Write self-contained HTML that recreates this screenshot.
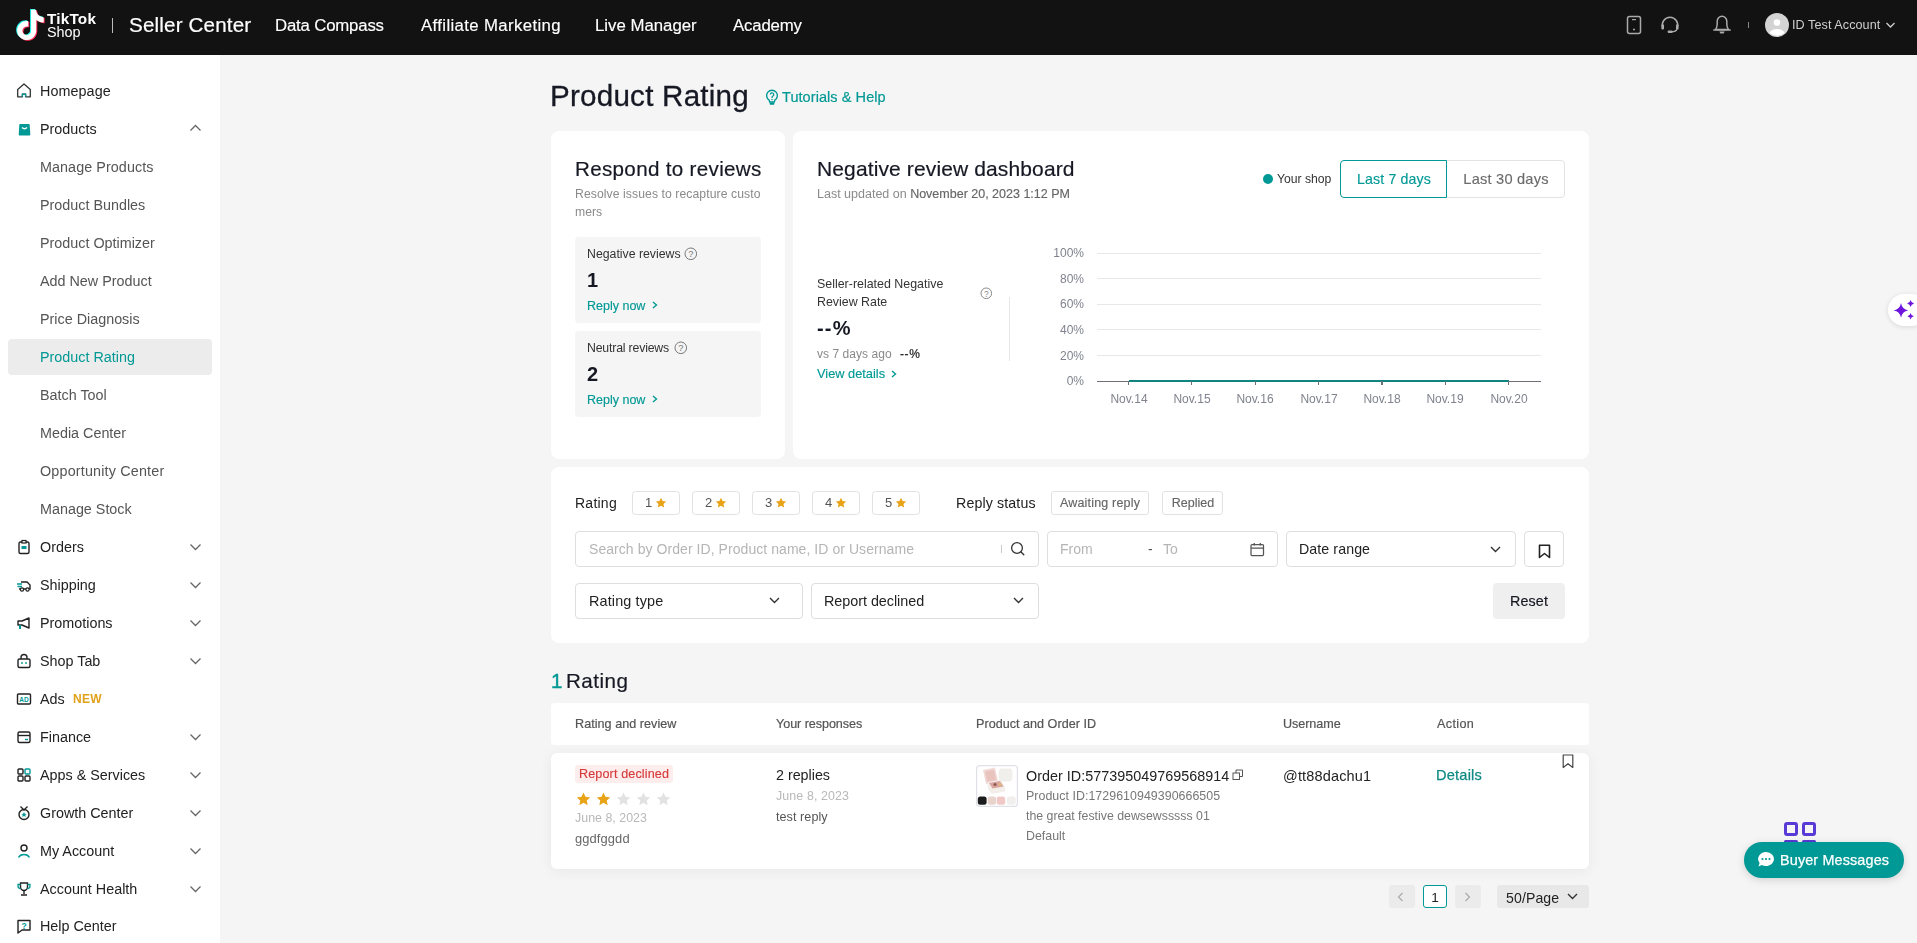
<!DOCTYPE html>
<html><head><meta charset="utf-8"><title>Product Rating</title>
<style>
html,body{margin:0;padding:0;}
body{width:1917px;height:943px;overflow:hidden;position:relative;background:#f5f5f5;font-family:"Liberation Sans", sans-serif;}
.t{position:absolute;white-space:nowrap;will-change:transform;}
.r{position:absolute;}
</style></head><body>
<div class="r" style="left:0.0px;top:0.0px;width:1917.0px;height:55.0px;background:#121212;"></div>
<svg class="r" style="left:14.0px;top:8.0px;" width="34" height="35" viewBox="0 0 34 35"><g transform="translate(1.2,1.8) scale(1.27,1.26)">
<path d="M12.525.02c1.31-.02 2.61-.01 3.91-.02.08 1.53.63 3.09 1.75 4.17 1.12 1.11 2.7 1.62 4.24 1.79v4.03c-1.44-.05-2.89-.35-4.2-.97-.57-.26-1.1-.59-1.62-.93-.01 2.920.01 5.84-.02 8.75-.08 1.4-.54 2.79-1.35 3.94-1.31 1.92-3.58 3.17-5.91 3.21-1.43.08-2.86-.31-4.08-1.03-2.020-1.19-3.44-3.37-3.65-5.71-.02-.5-.03-1-.01-1.49.18-1.9 1.12-3.72 2.58-4.96 1.66-1.44 3.980-2.13 6.15-1.72.02 1.48-.04 2.96-.04 4.440-.99-.32-2.15-.23-3.02.37-.63.41-1.11 1.04-1.36 1.75-.21.51-.15 1.07-.14 1.61.24 1.64 1.82 3.02 3.5 2.87 1.12-.01 2.19-.66 2.77-1.61.19-.33.4-.67.41-1.06.1-1.79.06-3.57.07-5.36.01-4.03-.01-8.05.02-12.07z" fill="#25F4EE" transform="translate(-0.8,-0.6)"/>
<path d="M12.525.02c1.31-.02 2.61-.01 3.91-.02.08 1.53.63 3.09 1.75 4.17 1.12 1.11 2.7 1.62 4.24 1.79v4.03c-1.44-.05-2.89-.35-4.2-.97-.57-.26-1.1-.59-1.62-.93-.01 2.920.01 5.84-.02 8.75-.08 1.4-.54 2.79-1.35 3.94-1.31 1.92-3.58 3.17-5.91 3.21-1.43.08-2.86-.31-4.08-1.03-2.020-1.19-3.44-3.37-3.65-5.71-.02-.5-.03-1-.01-1.49.18-1.9 1.12-3.72 2.58-4.96 1.66-1.44 3.980-2.13 6.15-1.72.02 1.48-.04 2.96-.04 4.440-.99-.32-2.15-.23-3.02.37-.63.41-1.11 1.04-1.36 1.75-.21.51-.15 1.07-.14 1.61.24 1.64 1.82 3.02 3.5 2.87 1.12-.01 2.19-.66 2.77-1.61.19-.33.4-.67.41-1.06.1-1.79.06-3.57.07-5.36.01-4.03-.01-8.05.02-12.07z" fill="#FE2C55" transform="translate(0.8,0.6)"/>
<path d="M12.525.02c1.31-.02 2.61-.01 3.91-.02.08 1.53.63 3.09 1.75 4.17 1.12 1.11 2.7 1.62 4.24 1.79v4.03c-1.44-.05-2.89-.35-4.2-.97-.57-.26-1.1-.59-1.62-.93-.01 2.920.01 5.84-.02 8.75-.08 1.4-.54 2.79-1.35 3.94-1.31 1.92-3.58 3.17-5.91 3.21-1.43.08-2.86-.31-4.08-1.03-2.020-1.19-3.44-3.37-3.65-5.71-.02-.5-.03-1-.01-1.49.18-1.9 1.12-3.72 2.58-4.96 1.66-1.44 3.980-2.13 6.15-1.72.02 1.48-.04 2.96-.04 4.440-.99-.32-2.15-.23-3.02.37-.63.41-1.11 1.04-1.36 1.75-.21.51-.15 1.07-.14 1.61.24 1.64 1.82 3.02 3.5 2.87 1.12-.01 2.19-.66 2.77-1.61.19-.33.4-.67.41-1.06.1-1.79.06-3.57.07-5.36.01-4.03-.01-8.05.02-12.07z" fill="#fff"/>
</g></svg>
<div class="t" style="left:46.8px;top:10.75px;font-size:15.3px;line-height:15.3px;color:#fff;font-weight:700;letter-spacing:0.200px;">TikTok</div>
<div class="t" style="left:46.8px;top:24.71px;font-size:14.4px;line-height:14.4px;color:#fff;">Shop</div>
<div class="r" style="left:112.0px;top:17.5px;width:1.3px;height:15.0px;background:#bbb;"></div>
<div class="t" id="w0" style="left:128.6px;top:14.96px;font-size:20.6px;line-height:20.6px;color:#fff;letter-spacing:0.167px;-webkit-text-stroke:0.2px #fff;">Seller Center</div>
<div class="t" id="w1" style="left:275.0px;top:17.88px;font-size:16.8px;line-height:16.8px;color:#fff;letter-spacing:-0.182px;-webkit-text-stroke:0.15px #fff;">Data Compass</div>
<div class="t" id="w2" style="left:421.0px;top:17.88px;font-size:16.8px;line-height:16.8px;color:#fff;letter-spacing:0.361px;-webkit-text-stroke:0.15px #fff;">Affiliate Marketing</div>
<div class="t" id="w3" style="left:595.0px;top:17.88px;font-size:16.8px;line-height:16.8px;color:#fff;letter-spacing:0.001px;-webkit-text-stroke:0.15px #fff;">Live Manager</div>
<div class="t" id="w4" style="left:733.0px;top:17.88px;font-size:16.8px;line-height:16.8px;color:#fff;letter-spacing:-0.166px;-webkit-text-stroke:0.15px #fff;">Academy</div>
<svg class="r" style="left:1626.0px;top:15.0px;" width="16" height="20" viewBox="0 0 16 20"><rect x="1.5" y="1.5" width="13" height="17" rx="2" fill="none" stroke="#aaa" stroke-width="1.5"/><rect x="6" y="4" width="4" height="1.2" fill="#aaa"/><circle cx="8" cy="14.5" r="1" fill="#aaa"/></svg>
<svg class="r" style="left:1660.0px;top:16.0px;" width="20" height="20" viewBox="0 0 20 20"><path d="M2.7 11.5 A7.7 7.7 0 1 1 17.3 11.5" fill="none" stroke="#aaa" stroke-width="1.5"/><rect x="1.4" y="8.2" width="2.6" height="5.2" rx="1.2" fill="#aaa"/><rect x="16" y="8.2" width="2.6" height="5.2" rx="1.2" fill="#aaa"/><path d="M17 13 Q16 15.8 11.5 15.8" fill="none" stroke="#aaa" stroke-width="1.4"/><rect x="7.6" y="14.6" width="5" height="2.4" rx="1.2" fill="#aaa"/></svg>
<svg class="r" style="left:1712.0px;top:14.0px;" width="20" height="22" viewBox="0 0 20 22"><path d="M3.5 15.5 Q5.2 13.5 5.2 10 V7.2 A4.8 5 0 0 1 14.8 7.2 V10 Q14.8 13.5 16.5 15.5 Z" fill="none" stroke="#aaa" stroke-width="1.5" stroke-linejoin="round"/><path d="M1.8 16 H18.2" stroke="#aaa" stroke-width="1.5" stroke-linecap="round"/><path d="M7.3 17.6 H12.7 L11.6 19.6 H8.4 Z" fill="#aaa"/></svg>
<div class="r" style="left:1748.0px;top:22.0px;width:1.0px;height:6.0px;background:#888;"></div>
<svg class="r" style="left:1765.0px;top:13.0px;" width="24" height="24" viewBox="0 0 24 24"><circle cx="12" cy="12" r="12" fill="#d3d3d3"/><circle cx="12" cy="9.5" r="3.3" fill="#fff"/><path d="M4.5 20 a8 6 0 0 1 15 0 a12 12 0 0 1 -15 0z" fill="#fff"/></svg>
<div class="t" id="w5" style="left:1792.3px;top:19.13px;font-size:12.6px;line-height:12.6px;color:#cfcfcf;letter-spacing:0.071px;">ID Test Account</div>
<svg class="r" style="left:1885.0px;top:21.0px;" width="11" height="8" viewBox="0 0 11 8"><path d="M1.5 2 l4 4 l4 -4" fill="none" stroke="#cfcfcf" stroke-width="1.3"/></svg>
<div class="r" style="left:0.0px;top:55.0px;width:220.0px;height:888.0px;background:#fff;"></div>
<div class="r" style="left:8.0px;top:339.0px;width:204.0px;height:36.0px;background:#ececec;border-radius:4px;"></div>
<div class="t" id="w6" style="left:40.0px;top:84.05px;font-size:14.35px;line-height:14.35px;color:#222;letter-spacing:0.071px;">Homepage</div>
<div class="t" style="left:40.0px;top:122.05px;font-size:14.35px;line-height:14.35px;color:#222;">Products</div>
<svg class="r" style="left:189.0px;top:124.0px;" width="13" height="8" viewBox="0 0 13 8"><path d="M1.5 6.5 l5 -5 l5 5" fill="none" stroke="#666" stroke-width="1.3"/></svg>
<div class="t" id="w7" style="left:40.0px;top:160.05px;font-size:14.35px;line-height:14.35px;color:#555;letter-spacing:0.071px;">Manage Products</div>
<div class="t" style="left:40.0px;top:198.05px;font-size:14.35px;line-height:14.35px;color:#555;">Product Bundles</div>
<div class="t" style="left:40.0px;top:236.05px;font-size:14.35px;line-height:14.35px;color:#555;">Product Optimizer</div>
<div class="t" style="left:40.0px;top:274.05px;font-size:14.35px;line-height:14.35px;color:#555;">Add New Product</div>
<div class="t" style="left:40.0px;top:312.05px;font-size:14.35px;line-height:14.35px;color:#555;">Price Diagnosis</div>
<div class="t" style="left:40.0px;top:350.05px;font-size:14.35px;line-height:14.35px;color:#009995;">Product Rating</div>
<div class="t" style="left:40.0px;top:388.05px;font-size:14.35px;line-height:14.35px;color:#555;">Batch Tool</div>
<div class="t" style="left:40.0px;top:426.05px;font-size:14.35px;line-height:14.35px;color:#555;">Media Center</div>
<div class="t" id="w8" style="left:40.0px;top:464.05px;font-size:14.35px;line-height:14.35px;color:#555;letter-spacing:0.176px;">Opportunity Center</div>
<div class="t" style="left:40.0px;top:502.05px;font-size:14.35px;line-height:14.35px;color:#555;">Manage Stock</div>
<div class="t" style="left:40.0px;top:540.05px;font-size:14.35px;line-height:14.35px;color:#222;">Orders</div>
<svg class="r" style="left:189.0px;top:543.0px;" width="13" height="8" viewBox="0 0 13 8"><path d="M1.5 1.5 l5 5 l5 -5" fill="none" stroke="#666" stroke-width="1.3"/></svg>
<div class="t" style="left:40.0px;top:578.05px;font-size:14.35px;line-height:14.35px;color:#222;">Shipping</div>
<svg class="r" style="left:189.0px;top:581.0px;" width="13" height="8" viewBox="0 0 13 8"><path d="M1.5 1.5 l5 5 l5 -5" fill="none" stroke="#666" stroke-width="1.3"/></svg>
<div class="t" style="left:40.0px;top:616.05px;font-size:14.35px;line-height:14.35px;color:#222;">Promotions</div>
<svg class="r" style="left:189.0px;top:619.0px;" width="13" height="8" viewBox="0 0 13 8"><path d="M1.5 1.5 l5 5 l5 -5" fill="none" stroke="#666" stroke-width="1.3"/></svg>
<div class="t" style="left:40.0px;top:654.05px;font-size:14.35px;line-height:14.35px;color:#222;">Shop Tab</div>
<svg class="r" style="left:189.0px;top:657.0px;" width="13" height="8" viewBox="0 0 13 8"><path d="M1.5 1.5 l5 5 l5 -5" fill="none" stroke="#666" stroke-width="1.3"/></svg>
<div class="t" style="left:40.0px;top:692.05px;font-size:14.35px;line-height:14.35px;color:#222;">Ads</div>
<div class="t" style="left:40.0px;top:730.05px;font-size:14.35px;line-height:14.35px;color:#222;">Finance</div>
<svg class="r" style="left:189.0px;top:733.0px;" width="13" height="8" viewBox="0 0 13 8"><path d="M1.5 1.5 l5 5 l5 -5" fill="none" stroke="#666" stroke-width="1.3"/></svg>
<div class="t" style="left:40.0px;top:768.05px;font-size:14.35px;line-height:14.35px;color:#222;">Apps &amp; Services</div>
<svg class="r" style="left:189.0px;top:771.0px;" width="13" height="8" viewBox="0 0 13 8"><path d="M1.5 1.5 l5 5 l5 -5" fill="none" stroke="#666" stroke-width="1.3"/></svg>
<div class="t" style="left:40.0px;top:806.05px;font-size:14.35px;line-height:14.35px;color:#222;">Growth Center</div>
<svg class="r" style="left:189.0px;top:809.0px;" width="13" height="8" viewBox="0 0 13 8"><path d="M1.5 1.5 l5 5 l5 -5" fill="none" stroke="#666" stroke-width="1.3"/></svg>
<div class="t" style="left:40.0px;top:844.05px;font-size:14.35px;line-height:14.35px;color:#222;">My Account</div>
<svg class="r" style="left:189.0px;top:847.0px;" width="13" height="8" viewBox="0 0 13 8"><path d="M1.5 1.5 l5 5 l5 -5" fill="none" stroke="#666" stroke-width="1.3"/></svg>
<div class="t" style="left:40.0px;top:882.05px;font-size:14.35px;line-height:14.35px;color:#222;">Account Health</div>
<svg class="r" style="left:189.0px;top:885.0px;" width="13" height="8" viewBox="0 0 13 8"><path d="M1.5 1.5 l5 5 l5 -5" fill="none" stroke="#666" stroke-width="1.3"/></svg>
<div class="t" style="left:40.0px;top:919.05px;font-size:14.35px;line-height:14.35px;color:#222;">Help Center</div>
<div class="t" style="left:73.0px;top:693.04px;font-size:12px;line-height:12px;color:#e0a21a;font-weight:700;letter-spacing:0.3px;">NEW</div>
<svg class="r" style="left:16.0px;top:83.0px;" width="16" height="16" viewBox="0 0 16 16"><path d="M1.7 6.5 L8 1 L14.3 6.5 V13.8 H9.6 V11.2 H6.4 V13.8 H1.7 Z" fill="none" stroke="#333" stroke-width="1.3" stroke-linejoin="round"/><path d="M6.4 13.8 V11.2 H9.6 V13.8" fill="none" stroke="#009995" stroke-width="1.3"/></svg>
<svg class="r" style="left:16.0px;top:121.0px;" width="16" height="16" viewBox="0 0 16 16"><path d="M4 1.5 H13 Q13.6 1.5 13.7 2.2 L14.3 12.2 Q14.3 13 13.5 13 H3.5 Q2.7 13 2.7 12.2 L3.3 2.2 Q3.4 1.5 4 1.5Z" fill="#009995" transform="translate(0,1.5)"/><path d="M6 6.5 q2.5 2.5 5 0" fill="none" stroke="#fff" stroke-width="1.3"/></svg>
<svg class="r" style="left:16.0px;top:539.0px;" width="16" height="16" viewBox="0 0 16 16"><rect x="3" y="3" width="10" height="11.5" rx="1.5" fill="none" stroke="#222" stroke-width="1.4"/><rect x="6" y="1.5" width="4" height="2.5" fill="#fff" stroke="#222" stroke-width="1.2"/><rect x="5.5" y="7" width="5" height="3" fill="#009995"/></svg>
<svg class="r" style="left:16.0px;top:577.0px;" width="16" height="16" viewBox="0 0 16 16"><path d="M5 5 H11 L14 8 V12 H3" fill="none" stroke="#222" stroke-width="1.4"/><path d="M1 7 H6 M1.5 9.5 H6" stroke="#009995" stroke-width="1.4"/><circle cx="6" cy="12.5" r="1.6" fill="#fff" stroke="#222" stroke-width="1.2"/><circle cx="11.5" cy="12.5" r="1.6" fill="#fff" stroke="#222" stroke-width="1.2"/></svg>
<svg class="r" style="left:16.0px;top:615.0px;" width="16" height="16" viewBox="0 0 16 16"><path d="M2 6 H6 L13 3 V13 L6 10 H2 Z" fill="none" stroke="#222" stroke-width="1.4" stroke-linejoin="round"/><path d="M4 10 V14" stroke="#009995" stroke-width="2"/></svg>
<svg class="r" style="left:16.0px;top:653.0px;" width="16" height="16" viewBox="0 0 16 16"><rect x="2" y="6" width="12" height="8.5" rx="1.5" fill="none" stroke="#222" stroke-width="1.4"/><path d="M5 6 V4.5 a3 3 0 0 1 6 0 V6" fill="none" stroke="#222" stroke-width="1.4"/><circle cx="6" cy="10" r="0.9" fill="#009995"/><circle cx="10" cy="10" r="0.9" fill="#009995"/></svg>
<svg class="r" style="left:16.0px;top:691.0px;" width="16" height="16" viewBox="0 0 16 16"><rect x="1.5" y="3" width="13" height="10" rx="1" fill="none" stroke="#222" stroke-width="1.4"/><text x="8" y="11" font-size="6.5" font-family="Liberation Sans" font-weight="700" fill="#009995" text-anchor="middle">AD</text></svg>
<svg class="r" style="left:16.0px;top:729.0px;" width="16" height="16" viewBox="0 0 16 16"><rect x="2" y="3" width="12" height="10.5" rx="1.5" fill="none" stroke="#222" stroke-width="1.4"/><path d="M2 6.5 H14" stroke="#222" stroke-width="1.4"/><path d="M9 10.5 H12" stroke="#009995" stroke-width="1.4"/></svg>
<svg class="r" style="left:16.0px;top:767.0px;" width="16" height="16" viewBox="0 0 16 16"><rect x="2" y="2" width="5" height="5" rx="1" fill="none" stroke="#222" stroke-width="1.4"/><rect x="9" y="2" width="5" height="5" rx="1" fill="none" stroke="#009995" stroke-width="1.4"/><rect x="2" y="9" width="5" height="5" rx="1" fill="none" stroke="#222" stroke-width="1.4"/><rect x="9" y="9" width="5" height="5" rx="1" fill="none" stroke="#222" stroke-width="1.4"/></svg>
<svg class="r" style="left:16.0px;top:805.0px;" width="16" height="16" viewBox="0 0 16 16"><circle cx="8" cy="9.5" r="5" fill="none" stroke="#222" stroke-width="1.4"/><path d="M4.5 1.5 L8 5 L11.5 1.5" fill="none" stroke="#222" stroke-width="1.3"/><path d="M8 7 l0.8 1.7 1.8 0.2 -1.3 1.2 0.4 1.8 -1.7 -0.9 -1.7 0.9 0.4 -1.8 -1.3 -1.2 1.8 -0.2z" fill="#009995"/></svg>
<svg class="r" style="left:16.0px;top:843.0px;" width="16" height="16" viewBox="0 0 16 16"><circle cx="8" cy="5" r="3" fill="none" stroke="#222" stroke-width="1.4"/><path d="M2.5 14.5 a6 5 0 0 1 11 0" fill="none" stroke="#009995" stroke-width="1.5"/></svg>
<svg class="r" style="left:16.0px;top:881.0px;" width="16" height="16" viewBox="0 0 16 16"><path d="M4.5 2 H11.5 V6 a3.5 3.5 0 0 1 -7 0 Z" fill="none" stroke="#222" stroke-width="1.4"/><path d="M4.5 3.5 H2 V5 a2.5 2.5 0 0 0 2.5 2.5 M11.5 3.5 H14 V5 a2.5 2.5 0 0 1 -2.5 2.5" fill="none" stroke="#009995" stroke-width="1.3"/><path d="M8 9.5 V13 M5 14 H11" stroke="#222" stroke-width="1.4"/></svg>
<svg class="r" style="left:16.0px;top:918.0px;" width="16" height="16" viewBox="0 0 16 16"><path d="M2 2.5 H14 V12 H6 L2 15 Z" fill="none" stroke="#222" stroke-width="1.4" stroke-linejoin="round"/><text x="8" y="10.5" font-size="8.5" font-family="Liberation Sans" font-weight="700" fill="#009995" text-anchor="middle">?</text></svg>
<div class="t" id="w9" style="left:549.9px;top:81.34px;font-size:29.6px;line-height:29.6px;color:#161823;letter-spacing:0.231px;-webkit-text-stroke:0.3px #161823;">Product Rating</div>
<svg class="r" style="left:765.0px;top:89.0px;" width="14" height="17" viewBox="0 0 14 17"><path d="M4.2 11.2 A5.4 5.4 0 1 1 9.8 11.2 L9.3 13 H4.7 Z" fill="none" stroke="#009995" stroke-width="1.4" stroke-linejoin="round"/><rect x="4.6" y="13.6" width="4.8" height="2.2" rx="0.8" fill="#009995"/><path d="M5.3 5.6 A1.75 1.75 0 1 1 7.9 7.1 Q7 7.6 7 8.6 V9" fill="none" stroke="#009995" stroke-width="1.2"/><circle cx="7" cy="10.6" r="0.75" fill="#009995"/></svg>
<div class="t" id="w10" style="left:782.4px;top:89.73px;font-size:14.5px;line-height:14.5px;color:#009995;letter-spacing:0.067px;-webkit-text-stroke:0.2px #009995;">Tutorials &amp; Help</div>
<div class="r" style="left:551.0px;top:131.0px;width:234.0px;height:328.0px;background:#fff;border-radius:8px;"></div>
<div class="r" style="left:793.0px;top:131.0px;width:796.0px;height:328.0px;background:#fff;border-radius:8px;"></div>
<div class="t" id="w11" style="left:575.3px;top:158.56px;font-size:20.6px;line-height:20.6px;color:#161823;letter-spacing:0.322px;-webkit-text-stroke:0.2px #161823;">Respond to reviews</div>
<div class="t" id="w12" style="left:575.3px;top:188.17px;font-size:12.2px;line-height:12.2px;color:#8a8a8a;letter-spacing:0.079px;">Resolve issues to recapture custo</div>
<div class="t" style="left:575.3px;top:205.97px;font-size:12.2px;line-height:12.2px;color:#8a8a8a;">mers</div>
<div class="r" style="left:575.0px;top:237.0px;width:186.0px;height:86.0px;background:#f5f5f5;border-radius:4px;"></div>
<div class="t" id="w13" style="left:587.4px;top:248.09px;font-size:12.3px;line-height:12.3px;color:#333;letter-spacing:-0.001px;">Negative reviews</div>
<svg class="r" style="left:683.9px;top:247.2px;" width="13.6" height="13.6" viewBox="0 0 13.6 13.6"><circle cx="6.8" cy="6.8" r="5.8" fill="none" stroke="#777" stroke-width="1"/><text x="6.8" y="10.1" font-size="9.3" font-family="Liberation Sans" fill="#777" text-anchor="middle">?</text></svg>
<div class="t" style="left:587.4px;top:270.37px;font-size:20px;line-height:20px;color:#161823;font-weight:700;">1</div>
<div class="t" id="w14" style="left:587.4px;top:300.22px;font-size:12.5px;line-height:12.5px;color:#009995;-webkit-text-stroke:0.15px #009995;">Reply now</div>
<svg class="r" style="left:652.0px;top:301.0px;" width="6" height="8" viewBox="0 0 6 8"><path d="M1 1 l3.5 3.0 l-3.5 3.0" fill="none" stroke="#009995" stroke-width="1.4"/></svg>
<div class="r" style="left:575.0px;top:331.0px;width:186.0px;height:86.0px;background:#f5f5f5;border-radius:4px;"></div>
<div class="t" style="left:587.4px;top:342.09px;font-size:12.3px;line-height:12.3px;color:#333;letter-spacing:-0.180px;">Neutral reviews</div>
<svg class="r" style="left:674.2px;top:341.2px;" width="13.6" height="13.6" viewBox="0 0 13.6 13.6"><circle cx="6.8" cy="6.8" r="5.8" fill="none" stroke="#777" stroke-width="1"/><text x="6.8" y="10.1" font-size="9.3" font-family="Liberation Sans" fill="#777" text-anchor="middle">?</text></svg>
<div class="t" style="left:587.4px;top:364.37px;font-size:20px;line-height:20px;color:#161823;font-weight:700;">2</div>
<div class="t" id="w15" style="left:587.4px;top:394.22px;font-size:12.5px;line-height:12.5px;color:#009995;-webkit-text-stroke:0.15px #009995;">Reply now</div>
<svg class="r" style="left:652.0px;top:395.0px;" width="6" height="8" viewBox="0 0 6 8"><path d="M1 1 l3.5 3.0 l-3.5 3.0" fill="none" stroke="#009995" stroke-width="1.4"/></svg>
<div class="t" id="w16" style="left:817.2px;top:158.42px;font-size:21px;line-height:21px;color:#161823;letter-spacing:0.125px;-webkit-text-stroke:0.2px #161823;">Negative review dashboard</div>
<div class="t" style="left:817.0px;top:187.92px;font-size:12.5px;line-height:12.5px;color:#8a8a8a;">Last updated on <span style="color:#666;-webkit-text-stroke:0.15px #666">November 20, 2023 1:12 PM</span></div>
<svg class="r" style="left:1262.0px;top:173.0px;" width="12" height="12" viewBox="0 0 12 12"><circle cx="6" cy="6" r="5" fill="#009995"/></svg>
<div class="t" id="w17" style="left:1277.0px;top:172.67px;font-size:12.2px;line-height:12.2px;color:#333;letter-spacing:-0.014px;">Your shop</div>
<div class="r" style="left:1446.0px;top:160.0px;width:119.0px;height:38.0px;background:#fff;border:1px solid #e3e3e3;box-sizing:border-box;border-radius:4px;border-top-left-radius:0;border-bottom-left-radius:0;"></div>
<div class="r" style="left:1340.0px;top:160.0px;width:107.0px;height:38.0px;background:#fff;border:1px solid #009995;box-sizing:border-box;border-radius:4px;border-top-right-radius:0;border-bottom-right-radius:0;"></div>
<div class="t" id="w18" style="left:1193.6px;width:400px;text-align:center;top:172.48px;font-size:14.2px;line-height:14.2px;color:#009995;letter-spacing:0.129px;-webkit-text-stroke:0.15px #009995;"><span>Last 7 days</span></div>
<div class="t" id="w19" style="left:1305.7px;width:400px;text-align:center;top:172.14px;font-size:14.6px;line-height:14.6px;color:#6b6b6b;letter-spacing:0.221px;-webkit-text-stroke:0.15px #6b6b6b;"><span>Last 30 days</span></div>
<div class="t" id="w20" style="left:817.0px;top:278.00px;font-size:12.4px;line-height:12.4px;color:#333;letter-spacing:0.014px;">Seller-related Negative</div>
<div class="t" style="left:817.0px;top:295.80px;font-size:12.4px;line-height:12.4px;color:#333;">Review Rate</div>
<svg class="r" style="left:980.2px;top:286.7px;" width="12.6" height="12.6" viewBox="0 0 12.6 12.6"><circle cx="6.3" cy="6.3" r="5.3" fill="none" stroke="#888" stroke-width="1"/><text x="6.3" y="9.6" font-size="8.5" font-family="Liberation Sans" fill="#888" text-anchor="middle">?</text></svg>
<div class="r" style="left:1009.0px;top:297.0px;width:1.0px;height:64.0px;background:#e6e6e6;"></div>
<div class="t" style="left:817.0px;top:317.57px;font-size:20px;line-height:20px;color:#161823;font-weight:700;letter-spacing:1.200px;">--%</div>
<div class="t" id="w21" style="left:817.0px;top:347.84px;font-size:12px;line-height:12px;color:#8a8a8a;letter-spacing:0.046px;">vs 7 days ago</div>
<div class="t" style="left:900.0px;top:347.84px;font-size:12px;line-height:12px;color:#222;letter-spacing:0.600px;-webkit-text-stroke:0.2px #222;">--%</div>
<div class="t" id="w22" style="left:817.0px;top:367.66px;font-size:12.8px;line-height:12.8px;color:#009995;-webkit-text-stroke:0.15px #009995;">View details</div>
<svg class="r" style="left:891.0px;top:369.5px;" width="6" height="8" viewBox="0 0 6 8"><path d="M1 1 l3.5 3.0 l-3.5 3.0" fill="none" stroke="#009995" stroke-width="1.4"/></svg>
<div class="r" style="left:1097.0px;top:252.5px;width:444.0px;height:1.0px;background:#e8e8ea;"></div>
<div class="t" style="left:784.0px;width:300px;text-align:right;top:247.14px;font-size:12px;line-height:12px;color:#80838f;">100%</div>
<div class="r" style="left:1097.0px;top:278.1px;width:444.0px;height:1.0px;background:#e8e8ea;"></div>
<div class="t" style="left:784.0px;width:300px;text-align:right;top:272.74px;font-size:12px;line-height:12px;color:#80838f;">80%</div>
<div class="r" style="left:1097.0px;top:303.7px;width:444.0px;height:1.0px;background:#e8e8ea;"></div>
<div class="t" style="left:784.0px;width:300px;text-align:right;top:298.34px;font-size:12px;line-height:12px;color:#80838f;">60%</div>
<div class="r" style="left:1097.0px;top:329.3px;width:444.0px;height:1.0px;background:#e8e8ea;"></div>
<div class="t" style="left:784.0px;width:300px;text-align:right;top:323.94px;font-size:12px;line-height:12px;color:#80838f;">40%</div>
<div class="r" style="left:1097.0px;top:354.9px;width:444.0px;height:1.0px;background:#e8e8ea;"></div>
<div class="t" style="left:784.0px;width:300px;text-align:right;top:349.54px;font-size:12px;line-height:12px;color:#80838f;">20%</div>
<div class="t" style="left:784.0px;width:300px;text-align:right;top:375.14px;font-size:12px;line-height:12px;color:#80838f;">0%</div>
<div class="r" style="left:1097.0px;top:380.8px;width:444.0px;height:1.2px;background:#6e7079;"></div>
<div class="r" style="left:1128.5px;top:379.5px;width:380.3px;height:2.3px;background:#10857f;"></div>
<div class="r" style="left:1127.9px;top:381.0px;width:1.2px;height:4.0px;background:#6e7079;"></div>
<div class="t" style="left:928.5px;width:400px;text-align:center;top:392.64px;font-size:12px;line-height:12px;color:#80838f;"><span>Nov.14</span></div>
<div class="r" style="left:1191.3px;top:381.0px;width:1.2px;height:4.0px;background:#6e7079;"></div>
<div class="t" style="left:991.9px;width:400px;text-align:center;top:392.64px;font-size:12px;line-height:12px;color:#80838f;"><span>Nov.15</span></div>
<div class="r" style="left:1254.7px;top:381.0px;width:1.2px;height:4.0px;background:#6e7079;"></div>
<div class="t" style="left:1055.3px;width:400px;text-align:center;top:392.64px;font-size:12px;line-height:12px;color:#80838f;"><span>Nov.16</span></div>
<div class="r" style="left:1318.0px;top:381.0px;width:1.2px;height:4.0px;background:#6e7079;"></div>
<div class="t" style="left:1118.6px;width:400px;text-align:center;top:392.64px;font-size:12px;line-height:12px;color:#80838f;"><span>Nov.17</span></div>
<div class="r" style="left:1381.4px;top:381.0px;width:1.2px;height:4.0px;background:#6e7079;"></div>
<div class="t" style="left:1182.0px;width:400px;text-align:center;top:392.64px;font-size:12px;line-height:12px;color:#80838f;"><span>Nov.18</span></div>
<div class="r" style="left:1444.8px;top:381.0px;width:1.2px;height:4.0px;background:#6e7079;"></div>
<div class="t" style="left:1245.4px;width:400px;text-align:center;top:392.64px;font-size:12px;line-height:12px;color:#80838f;"><span>Nov.19</span></div>
<div class="r" style="left:1508.2px;top:381.0px;width:1.2px;height:4.0px;background:#6e7079;"></div>
<div class="t" style="left:1308.8px;width:400px;text-align:center;top:392.64px;font-size:12px;line-height:12px;color:#80838f;"><span>Nov.20</span></div>
<div class="r" style="left:551.0px;top:467.0px;width:1038.0px;height:175.5px;background:#fff;border-radius:8px;"></div>
<div class="t" id="w23" style="left:575.3px;top:495.95px;font-size:14px;line-height:14px;color:#222;letter-spacing:0.240px;">Rating</div>
<div class="r" style="left:632.2px;top:491.0px;width:47.5px;height:24.0px;background:#fff;border:1px solid #e2e2e2;box-sizing:border-box;border-radius:3.5px;"></div>
<div class="t" style="left:645.2px;top:496.30px;font-size:13px;line-height:13px;color:#555;">1</div>
<svg class="r" style="left:654.8px;top:497.0px;" width="12" height="12" viewBox="0 0 12 12"><path d="M6 0.8 l1.55 3.3 3.6 0.45 -2.65 2.45 0.7 3.55 -3.2 -1.8 -3.2 1.8 0.7 -3.55 -2.65 -2.45 3.6 -0.45z" fill="#e8a317"/></svg>
<div class="r" style="left:692.2px;top:491.0px;width:47.5px;height:24.0px;background:#fff;border:1px solid #e2e2e2;box-sizing:border-box;border-radius:3.5px;"></div>
<div class="t" style="left:705.2px;top:496.30px;font-size:13px;line-height:13px;color:#555;">2</div>
<svg class="r" style="left:714.8px;top:497.0px;" width="12" height="12" viewBox="0 0 12 12"><path d="M6 0.8 l1.55 3.3 3.6 0.45 -2.65 2.45 0.7 3.55 -3.2 -1.8 -3.2 1.8 0.7 -3.55 -2.65 -2.45 3.6 -0.45z" fill="#e8a317"/></svg>
<div class="r" style="left:752.2px;top:491.0px;width:47.5px;height:24.0px;background:#fff;border:1px solid #e2e2e2;box-sizing:border-box;border-radius:3.5px;"></div>
<div class="t" style="left:765.2px;top:496.30px;font-size:13px;line-height:13px;color:#555;">3</div>
<svg class="r" style="left:774.8px;top:497.0px;" width="12" height="12" viewBox="0 0 12 12"><path d="M6 0.8 l1.55 3.3 3.6 0.45 -2.65 2.45 0.7 3.55 -3.2 -1.8 -3.2 1.8 0.7 -3.55 -2.65 -2.45 3.6 -0.45z" fill="#e8a317"/></svg>
<div class="r" style="left:812.2px;top:491.0px;width:47.5px;height:24.0px;background:#fff;border:1px solid #e2e2e2;box-sizing:border-box;border-radius:3.5px;"></div>
<div class="t" style="left:825.2px;top:496.30px;font-size:13px;line-height:13px;color:#555;">4</div>
<svg class="r" style="left:834.8px;top:497.0px;" width="12" height="12" viewBox="0 0 12 12"><path d="M6 0.8 l1.55 3.3 3.6 0.45 -2.65 2.45 0.7 3.55 -3.2 -1.8 -3.2 1.8 0.7 -3.55 -2.65 -2.45 3.6 -0.45z" fill="#e8a317"/></svg>
<div class="r" style="left:872.2px;top:491.0px;width:47.5px;height:24.0px;background:#fff;border:1px solid #e2e2e2;box-sizing:border-box;border-radius:3.5px;"></div>
<div class="t" style="left:885.2px;top:496.30px;font-size:13px;line-height:13px;color:#555;">5</div>
<svg class="r" style="left:894.8px;top:497.0px;" width="12" height="12" viewBox="0 0 12 12"><path d="M6 0.8 l1.55 3.3 3.6 0.45 -2.65 2.45 0.7 3.55 -3.2 -1.8 -3.2 1.8 0.7 -3.55 -2.65 -2.45 3.6 -0.45z" fill="#e8a317"/></svg>
<div class="t" id="w24" style="left:956.2px;top:495.78px;font-size:14.2px;line-height:14.2px;color:#222;letter-spacing:0.133px;">Reply status</div>
<div class="r" style="left:1051.4px;top:491.0px;width:98.1px;height:24.0px;background:#fff;border:1px solid #e2e2e2;box-sizing:border-box;border-radius:3px;"></div>
<div class="t" id="w25" style="left:900.4px;width:400px;text-align:center;top:496.82px;font-size:12.5px;line-height:12.5px;color:#666;letter-spacing:0.181px;-webkit-text-stroke:0.15px #666;"><span>Awaiting reply</span></div>
<div class="r" style="left:1162.3px;top:491.0px;width:60.4px;height:24.0px;background:#fff;border:1px solid #e2e2e2;box-sizing:border-box;border-radius:3px;"></div>
<div class="t" style="left:992.5px;width:400px;text-align:center;top:496.82px;font-size:12.5px;line-height:12.5px;color:#666;-webkit-text-stroke:0.15px #666;"><span>Replied</span></div>
<div class="r" style="left:575.0px;top:531.0px;width:463.5px;height:36.0px;background:#fff;border:1px solid #dedede;box-sizing:border-box;border-radius:4px;"></div>
<div class="t" id="w26" style="left:588.6px;top:541.75px;font-size:14px;line-height:14px;color:#b5b5b5;letter-spacing:0.060px;">Search by Order ID, Product name, ID or Username</div>
<div class="r" style="left:1001.0px;top:545.0px;width:1.0px;height:8.0px;background:#ccc;"></div>
<svg class="r" style="left:1010.0px;top:541.0px;" width="16" height="16" viewBox="0 0 16 16"><circle cx="7" cy="7" r="5.4" fill="none" stroke="#333" stroke-width="1.3"/><path d="M11 11 l2.8 2.8" stroke="#333" stroke-width="1.4" stroke-linecap="round"/></svg>
<div class="r" style="left:1047.0px;top:531.0px;width:231.0px;height:36.0px;background:#fff;border:1px solid #dedede;box-sizing:border-box;border-radius:4px;"></div>
<div class="t" id="w27" style="left:1060.0px;top:541.75px;font-size:14px;line-height:14px;color:#b5b5b5;letter-spacing:0.018px;">From</div>
<div class="t" style="left:1148.3px;top:541.75px;font-size:14px;line-height:14px;color:#555;">-</div>
<div class="t" style="left:1162.6px;top:541.75px;font-size:14px;line-height:14px;color:#b5b5b5;">To</div>
<svg class="r" style="left:1249.5px;top:541.5px;" width="15" height="15" viewBox="0 0 15 15"><rect x="1" y="2.6" width="12.5" height="11" rx="1" fill="none" stroke="#555" stroke-width="1.25"/><path d="M1 6.2 H13.5 M4.2 1 V3.5 M10.3 1 V3.5" stroke="#555" stroke-width="1.25"/></svg>
<div class="r" style="left:1286.0px;top:531.0px;width:230.0px;height:36.0px;background:#fff;border:1px solid #dedede;box-sizing:border-box;border-radius:4px;"></div>
<div class="t" id="w28" style="left:1299.0px;top:541.78px;font-size:14.2px;line-height:14.2px;color:#222;letter-spacing:0.089px;">Date range</div>
<svg class="r" style="left:1490.0px;top:545.5px;" width="11" height="7" viewBox="0 0 11 7"><path d="M1 1 l4.5 4.5 l4.5 -4.5" fill="none" stroke="#333" stroke-width="1.4"/></svg>
<div class="r" style="left:1524.0px;top:531.0px;width:40.0px;height:36.0px;background:#fff;border:1px solid #dedede;box-sizing:border-box;border-radius:4px;"></div>
<svg class="r" style="left:1538.0px;top:543.5px;" width="13" height="15" viewBox="0 0 13 15"><path d="M1.5 1.2 H11.5 V13.5 L6.5 9.5 L1.5 13.5 Z" fill="none" stroke="#222" stroke-width="1.6" stroke-linejoin="round"/></svg>
<div class="r" style="left:575.0px;top:583.0px;width:227.5px;height:36.0px;background:#fff;border:1px solid #dedede;box-sizing:border-box;border-radius:4px;"></div>
<div class="t" id="w29" style="left:588.6px;top:593.51px;font-size:14.4px;line-height:14.4px;color:#222;letter-spacing:0.141px;">Rating type</div>
<svg class="r" style="left:768.5px;top:597.0px;" width="11" height="7" viewBox="0 0 11 7"><path d="M1 1 l4.5 4.5 l4.5 -4.5" fill="none" stroke="#333" stroke-width="1.4"/></svg>
<div class="r" style="left:811.0px;top:583.0px;width:227.5px;height:36.0px;background:#fff;border:1px solid #dedede;box-sizing:border-box;border-radius:4px;"></div>
<div class="t" id="w30" style="left:824.0px;top:593.51px;font-size:14.4px;line-height:14.4px;color:#222;letter-spacing:-0.044px;">Report declined</div>
<svg class="r" style="left:1013.0px;top:597.0px;" width="11" height="7" viewBox="0 0 11 7"><path d="M1 1 l4.5 4.5 l4.5 -4.5" fill="none" stroke="#333" stroke-width="1.4"/></svg>
<div class="r" style="left:1493.0px;top:583.0px;width:71.6px;height:35.7px;background:#efefef;border-radius:4px;"></div>
<div class="t" id="w31" style="left:1329.0px;width:400px;text-align:center;top:593.90px;font-size:14.3px;line-height:14.3px;color:#161823;letter-spacing:0.136px;-webkit-text-stroke:0.2px #161823;"><span>Reset</span></div>
<div class="t" style="left:551.0px;top:670.95px;font-size:20.5px;line-height:20.5px;color:#009995;-webkit-text-stroke:0.45px #009995;">1</div>
<div class="t" id="w32" style="left:566.3px;top:670.86px;font-size:20.6px;line-height:20.6px;color:#161823;letter-spacing:0.460px;-webkit-text-stroke:0.2px #161823;">Rating</div>
<div class="r" style="left:551.0px;top:703.2px;width:1038.0px;height:41.4px;background:#fff;border-radius:4px;"></div>
<div class="t" id="w33" style="left:575.4px;top:717.83px;font-size:12.6px;line-height:12.6px;color:#555;letter-spacing:0.034px;-webkit-text-stroke:0.2px #555;">Rating and review</div>
<div class="t" id="w34" style="left:776.0px;top:717.83px;font-size:12.6px;line-height:12.6px;color:#555;letter-spacing:-0.061px;-webkit-text-stroke:0.2px #555;">Your responses</div>
<div class="t" id="w35" style="left:976.0px;top:717.83px;font-size:12.6px;line-height:12.6px;color:#555;letter-spacing:0.017px;-webkit-text-stroke:0.2px #555;">Product and Order ID</div>
<div class="t" id="w36" style="left:1283.2px;top:717.83px;font-size:12.6px;line-height:12.6px;color:#555;letter-spacing:-0.066px;-webkit-text-stroke:0.2px #555;">Username</div>
<div class="t" id="w37" style="left:1436.8px;top:717.83px;font-size:12.6px;line-height:12.6px;color:#555;letter-spacing:0.362px;-webkit-text-stroke:0.2px #555;">Action</div>
<div class="r" style="left:551.0px;top:753.0px;width:1038.0px;height:116.0px;background:#fff;border-radius:6px;box-shadow:0 2px 14px rgba(0,0,0,0.06);"></div>
<div class="r" style="left:575.4px;top:765.0px;width:97.5px;height:17.6px;background:#fdeded;border-radius:3px;"></div>
<div class="t" id="w38" style="left:578.6px;top:767.53px;font-size:12.6px;line-height:12.6px;color:#d63b3b;letter-spacing:0.123px;-webkit-text-stroke:0.15px #d63b3b;">Report declined</div>
<svg class="r" style="left:575.5px;top:792.0px;" width="15" height="15" viewBox="0 0 15 15"><path d="M7.5 0.5 l2 4.3 4.7 0.6 -3.45 3.2 0.9 4.6 -4.15 -2.35 -4.15 2.35 0.9 -4.6 -3.45 -3.2 4.7 -0.6z" fill="#e8a317"/></svg>
<svg class="r" style="left:595.5px;top:792.0px;" width="15" height="15" viewBox="0 0 15 15"><path d="M7.5 0.5 l2 4.3 4.7 0.6 -3.45 3.2 0.9 4.6 -4.15 -2.35 -4.15 2.35 0.9 -4.6 -3.45 -3.2 4.7 -0.6z" fill="#e8a317"/></svg>
<svg class="r" style="left:615.5px;top:792.0px;" width="15" height="15" viewBox="0 0 15 15"><path d="M7.5 0.5 l2 4.3 4.7 0.6 -3.45 3.2 0.9 4.6 -4.15 -2.35 -4.15 2.35 0.9 -4.6 -3.45 -3.2 4.7 -0.6z" fill="#e2e2e2"/></svg>
<svg class="r" style="left:635.5px;top:792.0px;" width="15" height="15" viewBox="0 0 15 15"><path d="M7.5 0.5 l2 4.3 4.7 0.6 -3.45 3.2 0.9 4.6 -4.15 -2.35 -4.15 2.35 0.9 -4.6 -3.45 -3.2 4.7 -0.6z" fill="#e2e2e2"/></svg>
<svg class="r" style="left:655.5px;top:792.0px;" width="15" height="15" viewBox="0 0 15 15"><path d="M7.5 0.5 l2 4.3 4.7 0.6 -3.45 3.2 0.9 4.6 -4.15 -2.35 -4.15 2.35 0.9 -4.6 -3.45 -3.2 4.7 -0.6z" fill="#e2e2e2"/></svg>
<div class="t" id="w39" style="left:575.4px;top:811.50px;font-size:12.4px;line-height:12.4px;color:#b8b8b8;letter-spacing:0.025px;">June 8, 2023</div>
<div class="t" id="w40" style="left:575.4px;top:833.08px;font-size:12.9px;line-height:12.9px;color:#666;letter-spacing:0.115px;">ggdfggdd</div>
<div class="t" id="w41" style="left:776.0px;top:768.40px;font-size:14.3px;line-height:14.3px;color:#222;letter-spacing:-0.004px;">2 replies</div>
<div class="t" id="w42" style="left:776.0px;top:789.50px;font-size:12.4px;line-height:12.4px;color:#b8b8b8;letter-spacing:0.114px;">June 8, 2023</div>
<div class="t" id="w43" style="left:776.0px;top:811.33px;font-size:12.6px;line-height:12.6px;color:#555;letter-spacing:0.061px;">test reply</div>
<svg class="r" style="left:976.0px;top:765.0px;" width="42" height="42" viewBox="0 0 42 42"><rect x="0.6" y="0.6" width="40.8" height="40.8" rx="3" fill="#fff" stroke="#dfe1e6" stroke-width="1.2"/>
<path d="M7 5 L19 2.5 L22 16.5 L10 19 Z" fill="#f1d9d6"/><path d="M9 6.5 L18 4.8 L20.3 15 L11.2 16.8 Z" fill="#e9c4bf"/>
<path d="M11.5 17.5 L24.5 15 L29 22 L29 26.5 L16 29 L12 24 Z" fill="#f3eeea"/><path d="M13 18 L24 16 L27.5 21.5 L16.5 23.5 Z" fill="#d9a59e"/><circle cx="19" cy="19.5" r="1.6" fill="#8e5a52"/><circle cx="24" cy="19.5" r="1.2" fill="#e3c06e"/>
<path d="M22.5 7.5 Q22.5 3.5 26.5 3.5 L33 3.5 Q36.5 3.5 36.5 7.5 L36.5 12.5 Q36.5 16.5 33 16.5 L26.5 16.5 Q22.5 16.5 22.5 12.5 Z" fill="#f1efec"/>
<rect x="1.8" y="31.5" width="8.8" height="8.2" rx="2.5" fill="#1c1c1c"/>
<rect x="11.7" y="31.5" width="8.4" height="8.2" rx="2.5" fill="#e8d3cd"/>
<rect x="20.7" y="31.5" width="8.5" height="8.2" rx="2.5" fill="#f0c9c7"/>
<rect x="30.9" y="31.5" width="8.8" height="8.2" rx="2.5" fill="#f0efed"/></svg>
<div class="t" id="w44" style="left:1026.0px;top:768.65px;font-size:14.35px;line-height:14.35px;color:#222;letter-spacing:0.027px;">Order ID:577395049769568914</div>
<svg class="r" style="left:1232.0px;top:769.0px;" width="12" height="12" viewBox="0 0 12 12"><rect x="1" y="4" width="6.5" height="6.5" fill="none" stroke="#555" stroke-width="1"/><path d="M4 4 V1 H10.5 V7.5 H7.5" fill="none" stroke="#555" stroke-width="1"/></svg>
<div class="t" id="w45" style="left:1026.1px;top:789.50px;font-size:12.4px;line-height:12.4px;color:#777;letter-spacing:0.042px;">Product ID:1729610949390666505</div>
<div class="t" id="w46" style="left:1026.0px;top:809.55px;font-size:12.35px;line-height:12.35px;color:#777;letter-spacing:-0.003px;">the great festive dewsewsssss 01</div>
<div class="t" style="left:1026.0px;top:829.50px;font-size:12.4px;line-height:12.4px;color:#777;">Default</div>
<div class="t" id="w47" style="left:1283.2px;top:768.53px;font-size:14.5px;line-height:14.5px;color:#222;letter-spacing:0.160px;">@tt88dachu1</div>
<div class="t" id="w48" style="left:1435.8px;top:768.44px;font-size:14.6px;line-height:14.6px;color:#0f8a85;letter-spacing:0.210px;-webkit-text-stroke:0.25px #0f8a85;">Details</div>
<svg class="r" style="left:1562.0px;top:753.5px;" width="12" height="15" viewBox="0 0 12 15"><path d="M1.2 1 H10.8 V13.5 L6 9.8 L1.2 13.5 Z" fill="none" stroke="#444" stroke-width="1.2" stroke-linejoin="round"/></svg>
<div class="r" style="left:1389.0px;top:885.0px;width:25.8px;height:23.4px;background:#ebebeb;border-radius:3px;"></div>
<svg class="r" style="left:1397.0px;top:892.0px;" width="8" height="10" viewBox="0 0 8 10"><path d="M5.5 1 l-4 4 l4 4" fill="none" stroke="#aaa" stroke-width="1.2"/></svg>
<div class="r" style="left:1423.0px;top:885.0px;width:23.7px;height:23.4px;background:#fff;border:1px solid #009995;box-sizing:border-box;border-radius:3px;"></div>
<div class="t" style="left:1234.9px;width:400px;text-align:center;top:890.57px;font-size:13.5px;line-height:13.5px;color:#222;"><span>1</span></div>
<div class="r" style="left:1455.0px;top:885.0px;width:25.7px;height:23.4px;background:#ebebeb;border-radius:3px;"></div>
<svg class="r" style="left:1464.0px;top:892.0px;" width="8" height="10" viewBox="0 0 8 10"><path d="M1.5 1 l4 4 l-4 4" fill="none" stroke="#aaa" stroke-width="1.2"/></svg>
<div class="r" style="left:1497.0px;top:885.0px;width:91.8px;height:23.4px;background:#e8e8e8;border-radius:3px;"></div>
<div class="t" id="w49" style="left:1506.4px;top:890.56px;font-size:14.1px;line-height:14.1px;color:#222;letter-spacing:0.101px;">50/Page</div>
<svg class="r" style="left:1566.5px;top:893.0px;" width="11" height="7" viewBox="0 0 11 7"><path d="M1 1 l4.5 4.5 l4.5 -4.5" fill="none" stroke="#333" stroke-width="1.4"/></svg>
<div class="r" style="left:1888.0px;top:294.0px;width:40.0px;height:32.0px;background:#fff;border-radius:16px;box-shadow:0 1px 5px rgba(0,0,0,0.12);"></div>
<svg class="r" style="left:1891.0px;top:296.0px;" width="26" height="26" viewBox="0 0 26 26"><path d="M10 7.1000000000000005 Q11.02 13.38 17.3 14.4 Q11.02 15.42 10 21.7 Q8.98 15.42 2.7 14.4 Q8.98 13.38 10 7.1000000000000005Z" fill="#6f14dd"/><path d="M19.6 4.1 Q20.12 7.07 23.1 7.6 Q20.12 8.12 19.6 11.1 Q19.08 8.12 16.1 7.6 Q19.08 7.07 19.6 4.1Z" fill="#6f14dd"/><path d="M19.6 17.0 Q20.10 19.80 22.900000000000002 20.3 Q20.10 20.80 19.6 23.6 Q19.11 20.80 16.3 20.3 Q19.11 19.80 19.6 17.0Z" fill="#6f14dd"/></svg>
<svg class="r" style="left:1784.0px;top:822.0px;" width="33" height="20" viewBox="0 0 33 20"><rect x="1.5" y="1.5" width="11" height="11" rx="1.5" fill="none" stroke="#5a3ad6" stroke-width="3"/><rect x="19.5" y="1.5" width="11" height="11" rx="1.5" fill="none" stroke="#5a3ad6" stroke-width="3"/><rect x="0" y="18" width="14" height="4" rx="1.5" fill="#5a3ad6"/><rect x="18" y="18" width="14" height="4" rx="1.5" fill="#5a3ad6"/></svg>
<div class="r" style="left:1743.7px;top:842.0px;width:160.1px;height:35.9px;background:#009995;border-radius:18px;box-shadow:0 2px 8px rgba(0,0,0,0.15);"></div>
<svg class="r" style="left:1757.0px;top:851.0px;" width="18" height="17" viewBox="0 0 18 17"><path d="M9 1 a8 7 0 1 1 -4.2 13 L1.5 15.5 L2.6 12 A8 7 0 0 1 9 1z" fill="#fff"/><circle cx="5.5" cy="8" r="1.1" fill="#009995"/><circle cx="9" cy="8" r="1.1" fill="#009995"/><circle cx="12.5" cy="8" r="1.1" fill="#009995"/></svg>
<div class="t" id="w50" style="left:1779.5px;top:852.81px;font-size:14.4px;line-height:14.4px;color:#fff;letter-spacing:0.138px;-webkit-text-stroke:0.25px #fff;">Buyer Messages</div>
</body></html>
